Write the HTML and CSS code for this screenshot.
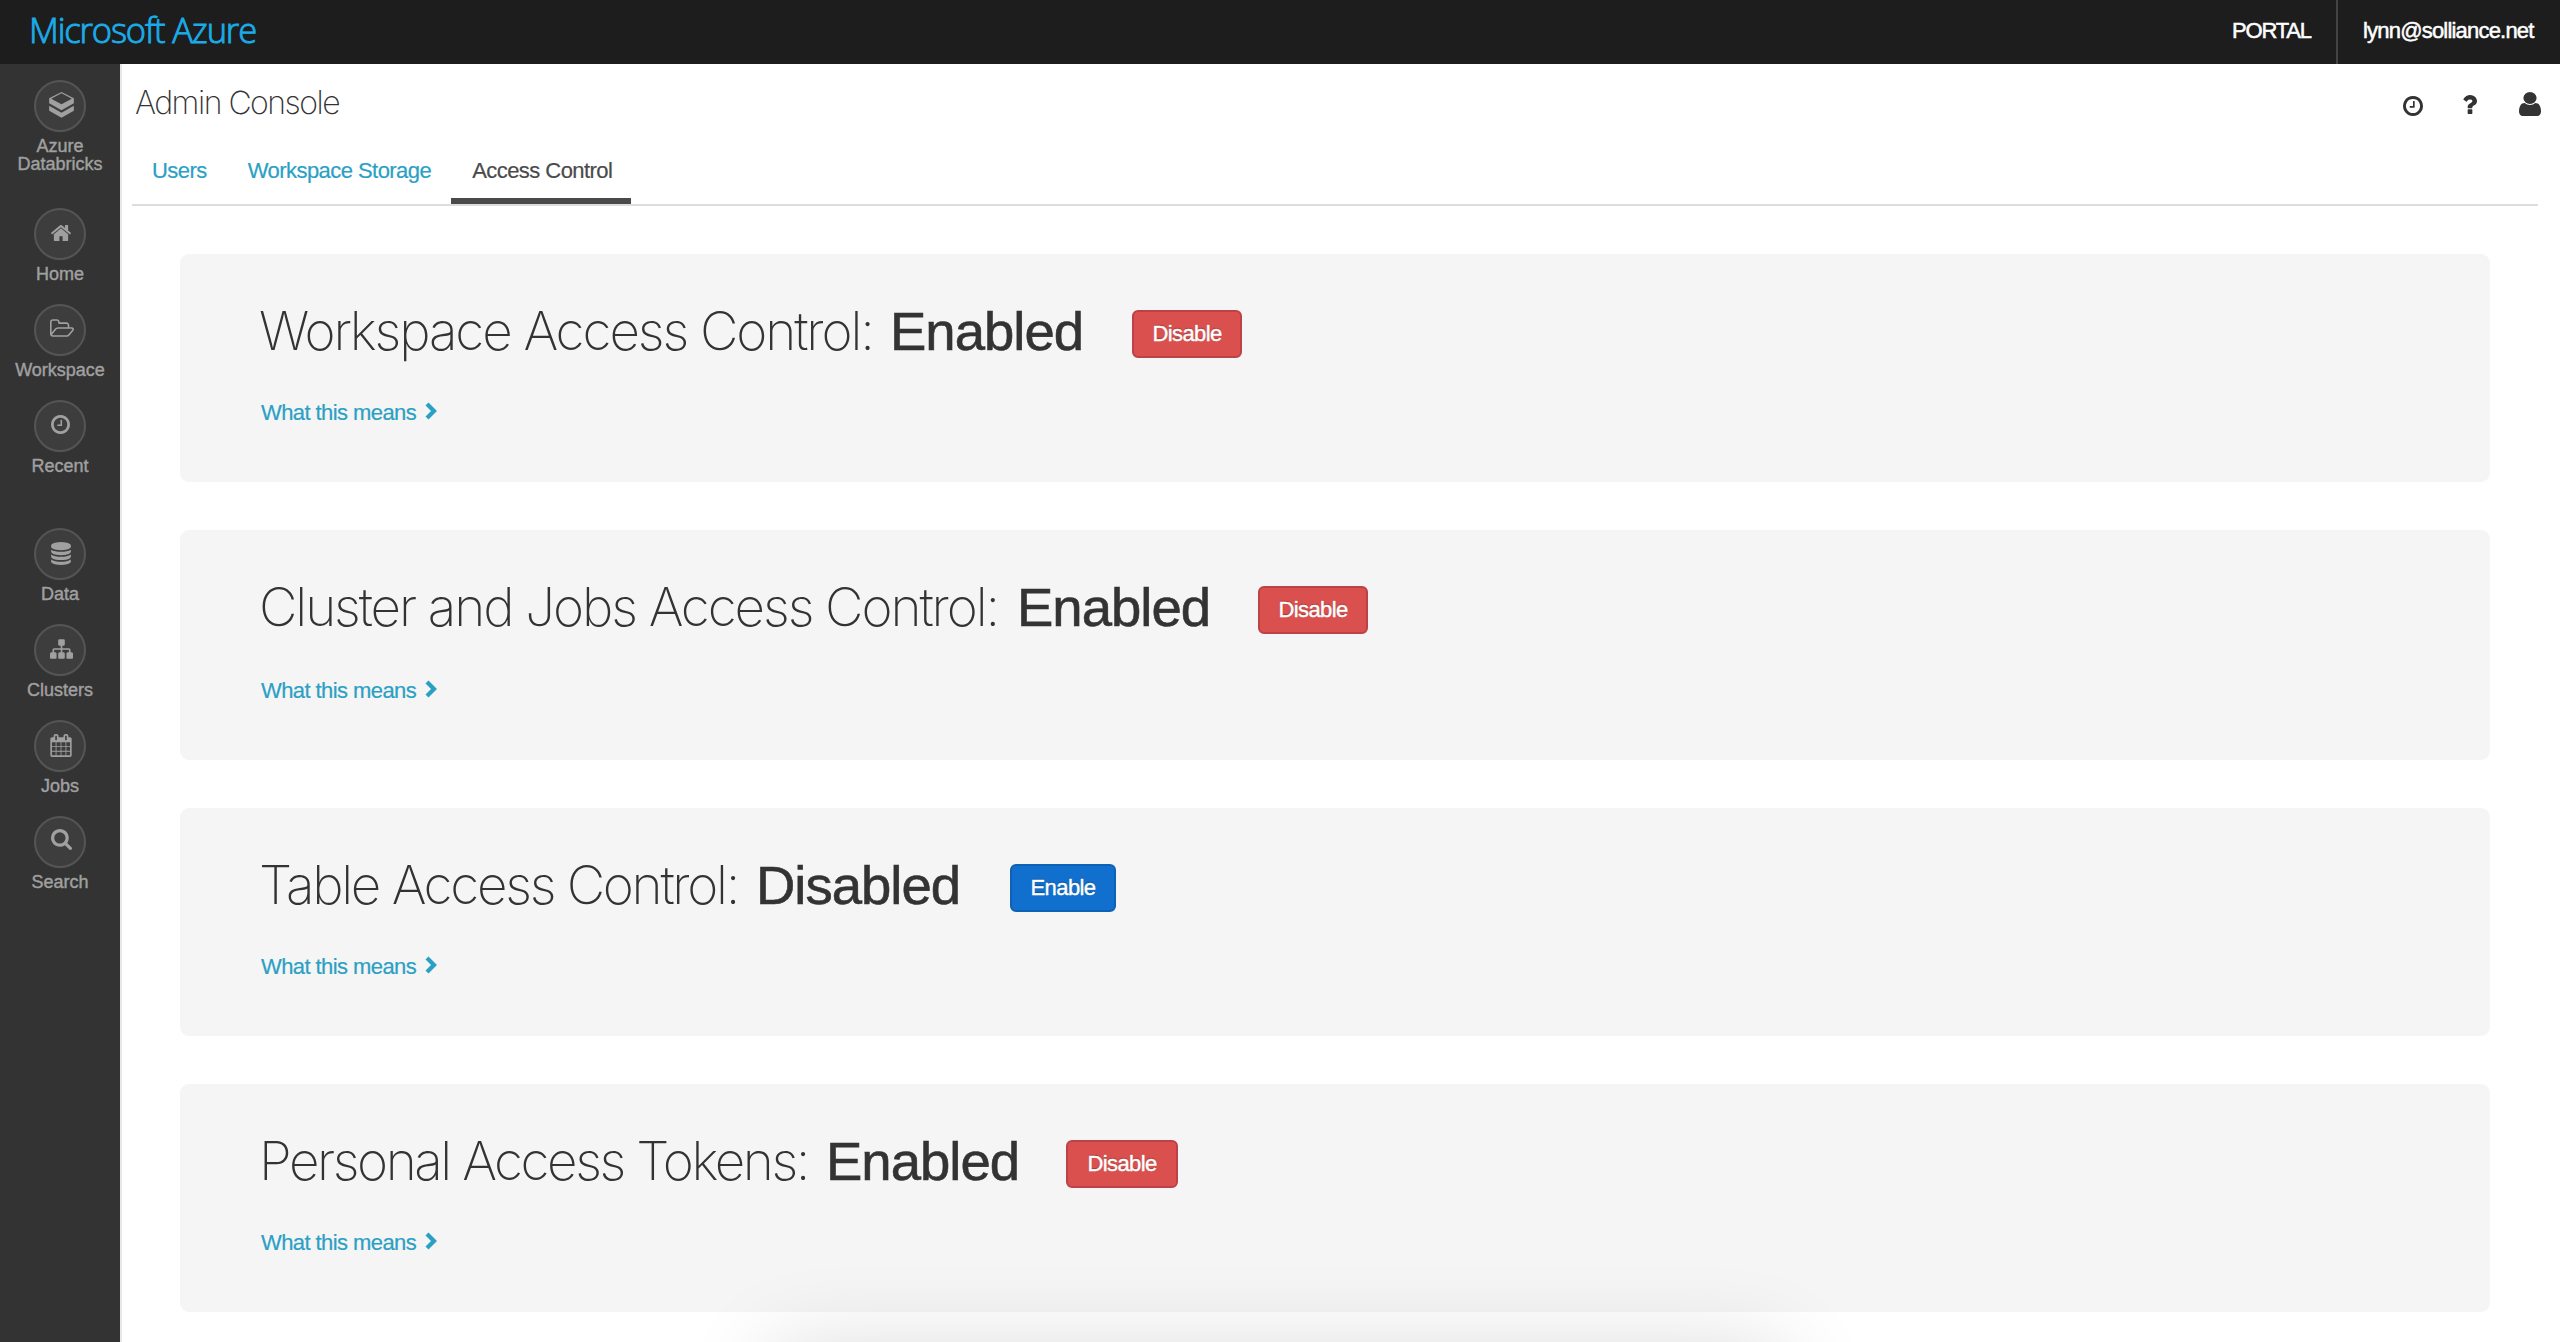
FILE: index.html
```html
<!DOCTYPE html>
<html lang="en">
<head>
<meta charset="utf-8">
<title>Admin Console - Azure Databricks</title>
<link rel="stylesheet" href="styles.css">
</head>
<body>
<svg class="sprite" aria-hidden="true">
  <symbol id="clock" viewBox="128 128 1536 1536"><path d="M1024 544v448q0 14-9 23t-23 9h-320q-14 0-23-9t-9-23v-64q0-14 9-23t23-9h224v-352q0-14 9-23t23-9h64q14 0 23 9t9 23zm416 352q0-148-73-273t-198-198-273-73-273 73-198 198-73 273 73 273 198 198 273 73 273-73 198-198 73-273zm224 0q0 209-103 385.500t-279.500 279.500-385.500 103-385.500-103-279.500-279.500-103-385.500 103-385.500 279.500-279.500 385.500-103 385.500 103 279.500 279.500 103 385.500z"/></symbol>
  <symbol id="chevron" viewBox="0 0 12 18"><path d="M2 2L9 9L2 16" fill="none" stroke="currentColor" stroke-width="4.200"/></symbol>
</svg>

<header class="topbar">
  <div class="brand">Microsoft Azure</div>
  <nav class="account">
    <a class="account-link portal">PORTAL</a>
    <a class="account-link email">lynn@solliance.net</a>
  </nav>
</header>

<div class="shell">
  <aside class="sidebar">
    <a class="item item-brand"><span class="disc"><svg width="25" height="26" viewBox="0 0 74 78"><path fill-rule="evenodd" d="M37 0L74 19V34L37 55L0 34V19ZM37 4L6 20L37 37L68 20Z"/><path d="M0 41L37 62L74 41V56L37 77L0 56Z"/></svg></span><span class="label">Azure Databricks</span></a>
    <a class="item"><span class="disc"><svg width="20" height="16" viewBox="89 253 1614 1283"><path d="M1472 992v480q0 26-19 45t-45 19h-384v-384h-256v384h-384q-26 0-45-19t-19-45v-480q0-1 .5-3t.5-3l575-474 575 474q1 2 1 6zm223-69l-62 74q-8 9-21 11h-3q-13 0-21-7l-692-577-692 577q-12 8-24 7-13-2-21-11l-62-74q-8-10-7-23.500t11-21.500l719-599q32-26 76-26t76 26l244 204v-195q0-14 9-23t23-9h192q14 0 23 9t9 23v408l219 182q10 8 11 21.500t-7 23.500z"/></svg></span><span class="label">Home</span></a>
    <a class="item"><span class="disc disc-folder"><svg width="24" height="18" viewBox="-64 128 1909 1408"><path d="M1717 931q0-35-53-35h-1088q-40 0-85.500 21.500t-71.500 52.500l-294 363q-18 24-18 40 0 35 53 35h1088q40 0 86-22t71-53l294-363q18-22 18-39zm-1141-163h768v-160q0-40-28-68t-68-28h-576q-40 0-68-28t-28-68v-64q0-40-28-68t-68-28h-320q-40 0-68 28t-28 68v853l256-315q44-53 116-87.500t140-34.500zm1269 163q0 62-46 120l-295 363q-43 53-116 87.500t-140 34.500h-1088q-92 0-158-66t-66-158v-960q0-92 66-158t158-66h320q92 0 158 66t66 158v32h544q92 0 158 66t66 158v160h192q54 0 99 24.500t67 70.500q15 32 15 68z"/></svg></span><span class="label">Workspace</span></a>
    <a class="item item-last"><span class="disc disc-clock"><svg width="19" height="19"><use href="#clock"/></svg></span><span class="label">Recent</span></a>
    <a class="item"><span class="disc"><svg width="20" height="23" viewBox="128 0 1536 1792"><path d="M896 768q237 0 443-43t325-127v170q0 69-103 128t-280 93.500-385 34.500-385-34.500-280-93.500-103-128v-170q119 84 325 127t443 43zm0 768q237 0 443-43t325-127v170q0 69-103 128t-280 93.500-385 34.500-385-34.500-280-93.500-103-128v-170q119 84 325 127t443 43zm0-384q237 0 443-43t325-127v170q0 69-103 128t-280 93.500-385 34.500-385-34.500-280-93.500-103-128v-170q119 84 325 127t443 43zm0-1152q208 0 385 34.500t280 93.500 103 128v128q0 69-103 128t-280 93.500-385 34.500-385-34.500-280-93.500-103-128v-128q0-69 103-128t280-93.500 385-34.500z"/></svg></span><span class="label">Data</span></a>
    <a class="item"><span class="disc"><svg width="23" height="20" viewBox="0 128 1792 1536"><path d="M1792 1248v320q0 40-28 68t-68 28h-320q-40 0-68-28t-28-68v-320q0-40 28-68t68-28h96v-192h-512v192h96q40 0 68 28t28 68v320q0 40-28 68t-68 28h-320q-40 0-68-28t-28-68v-320q0-40 28-68t68-28h96v-192h-512v192h96q40 0 68 28t28 68v320q0 40-28 68t-68 28h-320q-40 0-68-28t-28-68v-320q0-40 28-68t68-28h96v-192q0-52 38-90t90-38h512v-192h-96q-40 0-68-28t-28-68v-320q0-40 28-68t68-28h320q40 0 68 28t28 68v320q0 40-28 68t-68 28h-96v192h512q52 0 90 38t38 90v192h96q40 0 68 28t28 68z"/></svg></span><span class="label">Clusters</span></a>
    <a class="item"><span class="disc"><svg width="22" height="23" viewBox="64 0 1664 1792"><path d="M192 1664h288v-288h-288v288zm352 0h320v-288h-320v288zm-352-352h288v-320h-288v320zm352 0h320v-320h-320v320zm-352-384h288v-288h-288v288zm736 736h320v-288h-320v288zm-384-736h320v-288h-320v288zm768 736h288v-288h-288v288zm-384-352h320v-320h-320v320zm-352-864v-288q0-13-9.500-22.500t-22.500-9.500h-64q-13 0-22.500 9.500t-9.500 22.500v288q0 13 9.500 22.500t22.500 9.500h64q13 0 22.500-9.500t9.500-22.500zm736 864h288v-320h-288v320zm-384-384h320v-288h-320v288zm384 0h288v-288h-288v288zm32-480v-288q0-13-9.500-22.500t-22.500-9.500h-64q-13 0-22.500 9.500t-9.500 22.500v288q0 13 9.500 22.500t22.500 9.500h64q13 0 22.500-9.500t9.500-22.500zm384-64v1280q0 52-38 90t-90 38h-1408q-52 0-90-38t-38-90v-1280q0-52 38-90t90-38h128v-96q0-66 47-113t113-47h64q66 0 113 47t47 113v96h384v-96q0-66 47-113t113-47h64q66 0 113 47t47 113v96h128q52 0 90 38t38 90z"/></svg></span><span class="label">Jobs</span></a>
    <a class="item"><span class="disc disc-search"><svg width="21" height="21" viewBox="64 128 1664 1664"><path d="M1216 832q0-185-131.500-316.500t-316.500-131.500-316.500 131.500-131.500 316.500 131.500 316.500 316.500 131.500 316.500-131.500 131.500-316.500zm512 832q0 52-38 90t-90 38q-54 0-90-38l-343-342q-179 124-399 124-143 0-273.500-55.500t-225-150-150-225-55.500-273.500 55.500-273.500 150-225 225-150 273.500-55.500 273.500 55.500 225 150 150 225 55.500 273.500q0 220-124 399l343 343q37 37 37 90z"/></svg></span><span class="label">Search</span></a>
  </aside>

  <main class="main">
    <div class="page-head">
      <h1 class="page-title">Admin Console</h1>
      <div class="tools">
        <svg width="20" height="20"><use href="#clock"/></svg>
        <svg class="help" width="15" height="21" viewBox="384 256 1020 1280"><path d="M1088 1256v240q0 16-12 28t-28 12h-240q-16 0-28-12t-12-28v-240q0-16 12-28t28-12h240q16 0 28 12t12 28zm316-600q0 54-15.500 101t-35 76.500-55 59.500-57.500 43.500-61 35.500q-41 23-68.500 65t-27.500 67q0 17-12 32.500t-28 15.500h-240q-15 0-25.500-18.500t-10.500-37.500v-45q0-83 65-156.500t143-108.500q59-27 84-56t25-76q0-42-46.500-74t-107.500-32q-65 0-108 29-35 25-107 115-13 16-31 16-12 0-25-8l-164-125q-13-10-15.500-25t5.500-28q160-266 464-266 80 0 161 31t146 83 106 127.500 41 158.500z"/></svg>
        <svg class="user" width="22" height="24" viewBox="256 128 1280 1536" preserveAspectRatio="none"><path d="M1536 1399q0 109-62.500 187t-150.500 78h-854q-88 0-150.500-78t-62.500-187q0-85 8.500-160.500t31.500-152 58.500-131 94-89 134.500-34.500q131 128 313 128t313-128q76 0 134.500 34.500t94 89 58.500 131 31.500 152 8.500 160.500zm-256-887q0 159-112.500 271.500t-271.500 112.500-271.500-112.500-112.500-271.500 112.500-271.500 271.500-112.500 271.500 112.500 112.500 271.500z"/></svg>
      </div>
    </div>
    <nav class="tabs">
      <a class="tab">Users</a>
      <a class="tab">Workspace Storage</a>
      <a class="tab tab-active">Access Control</a>
    </nav>
    <div class="cards">
      <section class="card card-workspace">
        <div class="card-row"><h2 class="card-title">Workspace Access Control:</h2><strong class="status">Enabled</strong><button class="btn btn-danger">Disable</button></div>
        <a class="more">What this means<svg width="12" height="18"><use href="#chevron"/></svg></a>
      </section>
      <section class="card card-cluster">
        <div class="card-row"><h2 class="card-title">Cluster and Jobs Access Control:</h2><strong class="status">Enabled</strong><button class="btn btn-danger">Disable</button></div>
        <a class="more">What this means<svg width="12" height="18"><use href="#chevron"/></svg></a>
      </section>
      <section class="card card-table">
        <div class="card-row"><h2 class="card-title">Table Access Control:</h2><strong class="status">Disabled</strong><button class="btn btn-primary">Enable</button></div>
        <a class="more">What this means<svg width="12" height="18"><use href="#chevron"/></svg></a>
      </section>
      <section class="card card-tokens">
        <div class="card-row"><h2 class="card-title">Personal Access Tokens:</h2><strong class="status">Enabled</strong><button class="btn btn-danger">Disable</button></div>
        <a class="more">What this means<svg width="12" height="18"><use href="#chevron"/></svg></a>
      </section>
    </div>
  </main>
</div>
<div class="dock"><div class="dock-shadow"></div></div>
</body>
</html>
```
FILE: styles.css
```css
* { box-sizing: border-box; }
html, body { height: 100%; margin: 0; overflow: hidden; }
body {
  display: flex;
  flex-direction: column;
  background: #fff;
  color: #333;
  font: 22px/24px "Liberation Sans", Arial, sans-serif;
}
svg { display: block; fill: currentColor; flex: none; }
.sprite { position: absolute; width: 0; height: 0; }

/* top bar */
.topbar {
  flex: none;
  display: flex;
  justify-content: space-between;
  height: 64px;
  background: #1d1d1d;
}
.brand {
  padding-left: 29px;
  color: #1aabe8;
  font: 300 34.5px/60px "Open Sans", sans-serif;
  letter-spacing: -1.15px;
  -webkit-text-stroke: .9px;
}
.account { display: flex; color: #fff; line-height: 61px; -webkit-text-stroke: .5px; }
.account-link { white-space: nowrap; }
.portal { width: 104px; letter-spacing: -1.2px; }
.email { width: 224px; padding-left: 25px; border-left: 2px solid #444; letter-spacing: -.8px; }

/* sidebar */
.shell { flex: 1; display: flex; min-height: 0; }
.sidebar {
  flex: none;
  width: 122px;
  padding-top: 16px;
  background: #333;
  border-right: 2px solid #e8e8e8;
  color: #a0a0a0;
}
.item { display: flex; flex-direction: column; align-items: center; margin-bottom: 21px; }
.item-brand { margin-bottom: 35px; }
.item-last { margin-bottom: 53px; }
.disc {
  display: flex;
  align-items: center;
  justify-content: center;
  width: 52px;
  height: 52px;
  padding: 0 0 2px 2px;
  border: 2px solid #555;
  border-radius: 50%;
  background: #3d3d3d;
}
.disc-folder { padding: 0 0 4px 4px; }
.disc-clock { padding: 0 0 3px 1px; }
.disc-search { padding: 0 0 5px 3px; }
.label {
  width: 100px;
  margin-top: 5px;
  font-size: 18px;
  line-height: 18px;
  text-align: center;
  -webkit-text-stroke: .4px;
}

/* page */
.main { flex: 1; min-width: 0; }
.page-head {
  display: flex;
  justify-content: space-between;
  height: 72px;
  padding: 0 19px 0 13px;
}
.page-title {
  margin: 0;
  font: 200 32px/78px Inter, sans-serif;
  letter-spacing: -1.5px;
}
.tools { display: flex; align-items: flex-start; padding-top: 32px; }
.help { margin: -2px 0 0 39px; }
.user { margin: -4px 0 0 42px; }
.tabs {
  display: flex;
  height: 70px;
  margin: 0 22px 0 10px;
  border-bottom: 2px solid #ddd;
  color: #2aa0c4;
}
.tab { padding: 23px 20px 0 21px; letter-spacing: -.55px; -webkit-text-stroke: .2px; white-space: nowrap; }
.tab:first-child { padding-left: 20px; }
.tab-active { width: 180px; border-bottom: 6px solid #4a4a4a; color: #4a4a4a; }
.cards { display: flex; flex-direction: column; gap: 48px; padding: 48px 70px 0 58px; }
.card { height: 228px; padding: 53px 80px 0; border-radius: 9px; background: #f5f5f5; }
.card-cluster { height: 230px; }
.card-row { display: flex; align-items: flex-start; height: 54px; }
.card-title {
  margin: 0;
  font: 200 53px/48px Inter, sans-serif;
  letter-spacing: -2.1px;
  text-indent: -1px;
  white-space: nowrap;
}
.status {
  font-weight: 400;
  font-size: 54.5px;
  line-height: 49px;
  letter-spacing: -1px;
  -webkit-text-stroke: .6px;
}
.card-workspace .card-title { width: 630px; }
.card-cluster .card-title { width: 757px; }
.card-table .card-title { width: 496px; letter-spacing: -2.3px; }
.card-tokens .card-title { width: 566px; letter-spacing: -2.45px; }
.card-workspace .status { width: 242px; }
.card-cluster .status { width: 241px; }
.card-table .status { width: 254px; }
.card-tokens .status { width: 240px; }
.btn {
  width: 110px;
  height: 48px;
  margin-top: 3px;
  padding: 0;
  border: 2px solid #bd4247;
  border-radius: 6px;
  background: #d9504e;
  color: #fff;
  font: 22px/44px "Liberation Sans", Arial, sans-serif;
  letter-spacing: -.6px;
  text-shadow: 0 -1px 1px rgba(0, 0, 0, .3);
  -webkit-text-stroke: .4px;
}
.card-tokens .btn { width: 112px; }
.btn-primary { width: 106px; border-color: #0c62b5; background: #116fcd; }
.more { display: flex; margin: 40px 0 0 1px; color: #2aa0c4; letter-spacing: -.58px; -webkit-text-stroke: .2px; }
.more svg { margin: 1px 0 0 9px; }
.card-cluster .more { margin-top: 42px; }

/* soft shadow of the dock hidden below the window */
.dock {
  position: absolute;
  inset: auto 0 0 122px;
  height: 140px;
  overflow: hidden;
  pointer-events: none;
}
.dock-shadow {
  width: 1010px;
  height: 100px;
  margin: 150px 0 0 650px;
  box-shadow: 0 0 90px rgba(0, 0, 0, .16);
}
```
